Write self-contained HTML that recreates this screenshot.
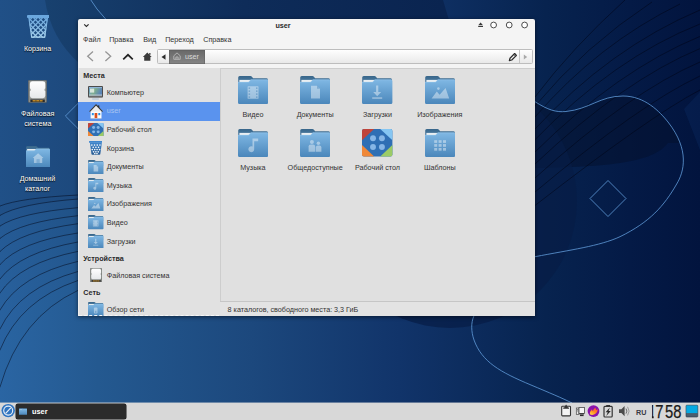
<!DOCTYPE html>
<html lang="ru">
<head>
<meta charset="utf-8">
<title>user</title>
<style>
html,body{margin:0;padding:0;}
body{width:700px;height:420px;overflow:hidden;position:relative;font-family:"Liberation Sans",sans-serif;font-size:7.2px;color:#333;background:#0a2a5e;}
.abs{position:absolute;}
svg{display:block;}
#wall{position:absolute;left:0;top:0;width:700px;height:420px;}
.dlabel{position:absolute;width:76px;text-align:center;color:#fff;font-size:7.2px;line-height:10px;text-shadow:0 1px 1px rgba(0,0,0,.8),0 0 1px rgba(0,0,0,.5);}
#win{position:absolute;left:78px;top:19px;width:457px;height:297px;background:#f4f4f4;border-radius:2px 2px 0 0;box-shadow:0 1px 4.5px rgba(0,0,0,.55);overflow:hidden;}
#title{position:absolute;left:155.4px;top:0.3px;width:100px;height:13px;line-height:13px;text-align:center;font-weight:bold;color:#2a2a2a;font-size:8px;transform:scaleX(0.9);}
.menu{position:absolute;top:15px;height:11px;line-height:11px;color:#333;}
#loc{position:absolute;left:79px;top:30px;width:375.7px;height:14.5px;box-sizing:border-box;border:0.7px solid #bdbdbd;border-radius:1.5px;background:linear-gradient(#fefefe,#e9e9e9);}
#side{position:absolute;left:0;top:49px;width:141.5px;height:248px;background:#e1e1e1;overflow:hidden;box-shadow:inset 1px 0 #ededed;}
#main{position:absolute;left:142px;top:49px;width:315px;height:233px;background:#e0e0e0;border-left:1px solid #cdcdcd;border-top:1px solid #cdcdcd;box-sizing:border-box;}
#status{position:absolute;left:142px;top:282px;width:315px;height:15px;line-height:15px;background:#e3e3e3;border-top:1px solid #c6c6c6;box-sizing:border-box;}
.srow{position:absolute;left:1px;width:141px;height:18.6px;line-height:18.6px;}
.srow span{position:absolute;left:27.7px;top:0.9px;white-space:nowrap;}
.shead{position:absolute;left:5.3px;font-weight:bold;color:#2a2a2a;height:12px;line-height:12px;}
.sel{background:#5a93ee;left:0 !important;padding-left:1px;height:19px !important;}
.sel span{color:#a8c5f1;}
.sel > *{margin-left:1px;}
.flabel{position:absolute;width:80px;text-align:center;white-space:nowrap;height:10px;line-height:10px;}
#bar{position:absolute;left:0;top:402px;width:700px;height:18px;background:#d8d8d8;border-top:1px solid rgba(222,222,222,0.42);background-clip:padding-box;box-sizing:border-box;}
</style>
</head>
<body>
<svg id="wall" viewBox="0 0 700 420">
<defs>
<linearGradient id="bg" gradientUnits="userSpaceOnUse" x1="0" y1="0" x2="700" y2="0">
<stop offset="0" stop-color="#2a65a3"/>
<stop offset="0.14" stop-color="#245990"/>
<stop offset="0.36" stop-color="#1c487d"/>
<stop offset="0.57" stop-color="#11346a"/>
<stop offset="0.78" stop-color="#07234f"/>
<stop offset="0.9" stop-color="#041a46"/>
<stop offset="1" stop-color="#02143e"/>
</linearGradient>
<linearGradient id="topd" gradientUnits="userSpaceOnUse" x1="45" y1="0" x2="443" y2="0">
<stop offset="0" stop-color="#18416f"/>
<stop offset="0.5" stop-color="#0e2c59"/>
<stop offset="1" stop-color="#0a2450"/>
</linearGradient>
<linearGradient id="ab10" gradientUnits="userSpaceOnUse" x1="0" y1="0" x2="98" y2="0"><stop offset="0" stop-color="#2964a1"/><stop offset="1" stop-color="#23588f"/></linearGradient>
<linearGradient id="ab9" gradientUnits="userSpaceOnUse" x1="0" y1="0" x2="98" y2="0"><stop offset="0" stop-color="#2962a0"/><stop offset="1" stop-color="#23578d"/></linearGradient>
<linearGradient id="ab8" gradientUnits="userSpaceOnUse" x1="0" y1="0" x2="98" y2="0"><stop offset="0" stop-color="#28619e"/><stop offset="1" stop-color="#22568c"/></linearGradient>
<linearGradient id="ab7" gradientUnits="userSpaceOnUse" x1="0" y1="0" x2="98" y2="0"><stop offset="0" stop-color="#28609c"/><stop offset="1" stop-color="#22558b"/></linearGradient>
<linearGradient id="ab6" gradientUnits="userSpaceOnUse" x1="0" y1="0" x2="98" y2="0"><stop offset="0" stop-color="#275f9b"/><stop offset="1" stop-color="#215489"/></linearGradient>
<linearGradient id="ab5" gradientUnits="userSpaceOnUse" x1="0" y1="0" x2="98" y2="0"><stop offset="0" stop-color="#265d99"/><stop offset="1" stop-color="#215388"/></linearGradient>
<linearGradient id="ab4" gradientUnits="userSpaceOnUse" x1="0" y1="0" x2="98" y2="0"><stop offset="0" stop-color="#265c97"/><stop offset="1" stop-color="#205287"/></linearGradient>
<linearGradient id="ab3" gradientUnits="userSpaceOnUse" x1="0" y1="0" x2="98" y2="0"><stop offset="0" stop-color="#255b96"/><stop offset="1" stop-color="#205185"/></linearGradient>
<linearGradient id="ab2" gradientUnits="userSpaceOnUse" x1="0" y1="0" x2="98" y2="0"><stop offset="0" stop-color="#255a94"/><stop offset="1" stop-color="#1f5084"/></linearGradient>
<linearGradient id="ab1" gradientUnits="userSpaceOnUse" x1="0" y1="0" x2="98" y2="0"><stop offset="0" stop-color="#23568f"/><stop offset="1" stop-color="#1e4c80"/></linearGradient>
<linearGradient id="ab0" gradientUnits="userSpaceOnUse" x1="0" y1="0" x2="98" y2="0"><stop offset="0" stop-color="#205087"/><stop offset="1" stop-color="#1c477a"/></linearGradient>
</defs>
<rect width="700" height="420" fill="url(#bg)"/>
<path d="M0,387 Q20,317.4 78,290.4 L86,289.4 L86,0 L0,0 Z" fill="url(#ab10)"/>
<path d="M0,350 Q20,300.0 78,280.5 L86,279.5 L86,0 L0,0 Z" fill="url(#ab9)"/>
<path d="M0,329 Q20,287.6 78,271.5 L86,270.5 L86,0 L0,0 Z" fill="url(#ab8)"/>
<path d="M0,310 Q20,275.0 78,261.4 L86,260.4 L86,0 L0,0 Z" fill="url(#ab7)"/>
<path d="M0,293 Q20,263.0 78,251.4 L86,250.4 L86,0 L0,0 Z" fill="url(#ab6)"/>
<path d="M0,279 Q20,252.4 78,242 L86,241 L86,0 L0,0 Z" fill="url(#ab5)"/>
<path d="M0,264.6 Q20,241.8 78,233 L86,232 L86,0 L0,0 Z" fill="url(#ab4)"/>
<path d="M0,251.5 Q20,231.5 78,223.7 L86,222.7 L86,0 L0,0 Z" fill="url(#ab3)"/>
<path d="M0,238.4 Q20,222.1 78,215.7 L86,214.7 L86,0 L0,0 Z" fill="url(#ab2)"/>
<path d="M0,226 Q20,212.8 78,207.7 L86,206.7 L86,0 L0,0 Z" fill="url(#ab1)"/>
<path d="M0,215.4 Q20,203.6 78,199 L86,198 L86,0 L0,0 Z" fill="url(#ab0)"/>
<path d="M45,0 A105,105 0 0 0 80,64 L462,64 L443,0 Z" fill="url(#topd)"/>
<path d="M535,101.7 C548,110 556,112.5 566,111.5 C590,109 600,96 623,96 C645,96 660,112 668,122 C676,132 679,138 680,143 L668,143 C655,160 620,167 535,168 Z" fill="#040f2c" fill-opacity="0.5"/>
<circle cx="450" cy="201" r="127" fill="#071c46" fill-opacity="0.7"/>
<path d="M684,109 L700,92 L700,150 Z" fill="#2a6ac0" fill-opacity="0.10"/>
<g fill="none" stroke="#000311" stroke-opacity="0.72" stroke-width="0.65">
<path d="M535,97 Q572,48 625,0"/>
<path d="M535,106 Q585,46 652,2"/>
<path d="M535,117 Q598,44 680,4"/>
<path d="M535,129 Q610,48 700,10"/>
<path d="M535,139.7 Q614,58 700,24"/>
<path d="M535,152 Q618,70 700,36.4"/>
<path d="M535,164 Q624,80 700,48.6"/>
<path d="M535,178 Q630,92 700,62"/>
<path d="M535,192 Q640,104 700,76"/>
<path d="M535,205.5 Q650,116 700,90"/>
<path d="M-1,207.2 L0,206 Q20,198 78,195 l6,-0.3"/>
<path d="M-1,216.9 L0,215.4 Q20,203.6 78,199 l6,-0.5"/>
<path d="M-1,227.5 L0,226 Q20,212.8 78,207.7 l6,-0.5"/>
<path d="M-1,239.9 L0,238.4 Q20,222.1 78,215.7 l6,-0.7"/>
<path d="M-1,253.0 L0,251.5 Q20,231.5 78,223.7 l6,-0.8"/>
<path d="M-1,266.1 L0,264.6 Q20,241.8 78,233 l6,-0.9"/>
<path d="M-1,280.5 L0,279 Q20,252.4 78,242 l6,-1.1"/>
<path d="M-1,294.5 L0,293 Q20,263.0 78,251.4 l6,-1.2"/>
<path d="M-1,311.5 L0,310 Q20,275.0 78,261.4 l6,-1.4"/>
<path d="M-1,330.5 L0,329 Q20,287.6 78,271.5 l6,-1.7"/>
<path d="M-1,351.5 L0,350 Q20,300.0 78,280.5 l6,-2.0"/>
<path d="M-1,388.5 L0,387 Q20,317.4 78,290.4 l6,-2.8"/>
</g>
<g fill="none" stroke="#5f9ad8" stroke-opacity="0.9" stroke-width="0.9">
<path d="M535,101.7 C548,110 556,112.5 566,111.5 C590,109 600,96 623,96 C645,96 660,112 668,122 C690,150 684,172 676.7,184 C664,206 650,222 620,236.7 C600,246 570,250 535,256.7"/>
<path d="M490,300 C474,308 468,322 474,340 C482,362 500,372 531,385 C550,393 562,398 572,403"/>
<path d="M89.5,-2 Q96,9 106.5,20"/>
<path d="M608,180.5 L626,198.5 L608,216.5 L590,198.5 Z"/>
<path d="M82,99.4 L65.4,116 L82,132.6"/>
</g>
</svg>
<div class="abs" style="left:26.6px;top:14.9px;line-height:0;"><svg width="22.4" height="22.8" viewBox="0 0 22.4 22.8" preserveAspectRatio="none">
<defs><linearGradient id="tg15" x1="0" y1="0" x2="0" y2="1"><stop offset="0" stop-color="#6aa6dc"/><stop offset="1" stop-color="#a4d0ec"/></linearGradient>
<clipPath id="tc15"><path d="M1.6,2.6 L20.8,2.6 L18,22.8 L4.4,22.8 Z"/></clipPath></defs>
<g clip-path="url(#tc15)" stroke="url(#tg15)" stroke-width="1.25" fill="none"><path d="M-31.2,2 L-10.2,23" /><path d="M-10.2,2 L-31.2,23" /><path d="M-25.9,2 L-4.9,23" /><path d="M-4.9,2 L-25.9,23" /><path d="M-20.6,2 L0.4,23" /><path d="M0.4,2 L-20.6,23" /><path d="M-15.3,2 L5.7,23" /><path d="M5.7,2 L-15.3,23" /><path d="M-10.0,2 L11.0,23" /><path d="M11.0,2 L-10.0,23" /><path d="M-4.7,2 L16.3,23" /><path d="M16.3,2 L-4.7,23" /><path d="M0.6,2 L21.6,23" /><path d="M21.6,2 L0.6,23" /><path d="M5.9,2 L26.9,23" /><path d="M26.9,2 L5.9,23" /><path d="M11.2,2 L32.2,23" /><path d="M32.2,2 L11.2,23" /><path d="M16.5,2 L37.5,23" /><path d="M37.5,2 L16.5,23" /><path d="M21.8,2 L42.8,23" /><path d="M42.8,2 L21.8,23" /><path d="M27.1,2 L48.1,23" /><path d="M48.1,2 L27.1,23" /><path d="M32.4,2 L53.4,23" /><path d="M53.4,2 L32.4,23" /><path d="M37.7,2 L58.7,23" /><path d="M58.7,2 L37.7,23" /><path d="M43.0,2 L64.0,23" /><path d="M64.0,2 L43.0,23" /><path d="M48.3,2 L69.3,23" /><path d="M69.3,2 L48.3,23" /><path d="M53.6,2 L74.6,23" /><path d="M74.6,2 L53.6,23" /><path d="M58.9,2 L79.9,23" /><path d="M79.9,2 L58.9,23" /></g>
<path d="M1.9,2.6 L4.7,22.2 L17.7,22.2 L20.5,2.6" fill="none" stroke="url(#tg15)" stroke-width="1.2"/>
<rect x="0" y="0" width="22.4" height="3" rx="0.9" fill="#6ba7de"/></svg></div>
<div class="dlabel" style="left:-0.4px;top:43.6px;">Корзина</div>
<div class="abs" style="left:28px;top:80px;line-height:0;"><svg width="19" height="22.8" viewBox="0 0 19 23" preserveAspectRatio="none">
<defs><linearGradient id="dg16" x1="0" y1="0" x2="0" y2="1"><stop offset="0" stop-color="#ffffff"/><stop offset="1" stop-color="#e6e8ea"/></linearGradient></defs>
<rect x="0.3" y="0.3" width="18.4" height="22.4" rx="1" fill="#8b8e8b" stroke="#5c5e5c" stroke-width="0.6"/>
<path d="M4.4,1.2 L14.8,1.2 Q17.3,1.2 17.3,3.7 L17.3,8.2 Q16.5,8.8 16.5,9.8 Q16.5,10.8 17.3,11.4 L17.3,15.9 Q17.3,18.4 14.8,18.4 L4.4,18.4 Q1.9,18.4 1.9,15.9 L1.9,11.4 Q2.7,10.8 2.7,9.8 Q2.7,8.8 1.9,8.2 L1.9,3.7 Q1.9,1.2 4.4,1.2 Z" fill="url(#dg16)"/>
<rect x="2.4" y="19.7" width="14.4" height="2.5" fill="#2c2c2a"/>
<rect x="4.6" y="20.4" width="10" height="1.2" fill="#e9a227"/>
<rect x="7.6" y="20.4" width="0.7" height="1.2" fill="#2c2c2a"/><rect x="11" y="20.4" width="0.7" height="1.2" fill="#2c2c2a"/>
</svg></div>
<div class="dlabel" style="left:-0.2px;top:108.6px;">Файловая<br>система</div>
<div class="abs" style="left:25.8px;top:145.5px;line-height:0;"><svg width="24.2" height="21.7" viewBox="0 0 30.4 28" preserveAspectRatio="none">
<defs><linearGradient id="fb17" x1="0" y1="0" x2="0" y2="1"><stop offset="0" stop-color="#38668a"/><stop offset="1" stop-color="#5f90b8"/></linearGradient>
<linearGradient id="ff17" x1="0" y1="0" x2="0" y2="1"><stop offset="0" stop-color="#80b8e4"/><stop offset="1" stop-color="#4b87bb"/></linearGradient></defs>
<path d="M0.2,1.6 Q0.2,0.1 1.7,0.1 L12.4,0.1 Q13.4,0.1 14.1,0.9 L15.2,2.2 L28.4,2.2 Q29.8,2.2 29.8,3.6 L29.8,12 L0.2,12 Z" fill="url(#fb17)"/>
<rect x="1.4" y="3.9" width="11.5" height="3" fill="#e9eef2"/>
<path d="M0,5.9 L10.6,5.9 L12.8,3.5 L28.9,3.5 Q30.4,3.5 30.4,5 L30.4,26.4 Q30.4,27.9 28.9,27.9 L1.5,27.9 Q0,27.9 0,26.4 Z" fill="url(#ff17)"/>
<path d="M0.3,6.2 L10.75,6.2 L12.95,3.8 L29,3.8" fill="none" stroke="#a5d0f0" stroke-width="0.5" opacity="0.8"/>
<path d="M15.2,9.4 L22,15.4 L20.4,15.4 L20.4,22 L10,22 L10,15.4 L8.4,15.4 Z" fill="#ffffff" fill-opacity="0.42"/><rect x="13.2" y="17" width="4" height="5" fill="#5a95c8" fill-opacity="0.5"/>
</svg></div>
<div class="dlabel" style="left:-0.5px;top:173.6px;">Домашний<br>каталог</div>

<div id="win">
<div id="title">user</div>
<svg class="abs" style="left:2px;top:2px;" width="12" height="8" viewBox="0 0 12 8"><path d="M4.2,3.3 L6.4,5.5 L8.6,3.3" fill="none" stroke="#2a2a2a" stroke-width="1.15"/></svg>
<svg class="abs" style="left:397px;top:0;" width="60" height="13" viewBox="0 0 60 13">
<path d="M5.6,3.6 L8,6.2 L3.2,6.2 Z M3.2,6.9 h4.8 v1.2 h-4.8 Z" fill="#3a3a3a"/>
<circle cx="18.6" cy="6" r="2.9" fill="#fff" stroke="#3a3a3a" stroke-width="0.9"/>
<circle cx="34.2" cy="6" r="2.9" fill="#fff" stroke="#3a3a3a" stroke-width="0.9"/>
<circle cx="49.6" cy="6" r="2.9" fill="#fff" stroke="#3a3a3a" stroke-width="0.9"/>
</svg>
<div class="menu" style="left:5px;">Файл</div>
<div class="menu" style="left:31.2px;">Правка</div>
<div class="menu" style="left:65.2px;">Вид</div>
<div class="menu" style="left:87.2px;">Переход</div>
<div class="menu" style="left:125.2px;">Справка</div>
<svg class="abs" style="left:0;top:28px;" width="80" height="20" viewBox="0 0 80 20">
<path d="M15,4.4 L9.7,9.2 L15,14" fill="none" stroke="#969696" stroke-width="1.3"/>
<path d="M27.4,4.4 L32.7,9.2 L27.4,14" fill="none" stroke="#969696" stroke-width="1.3"/>
<path d="M45.2,12.4 L50,7.8 L54.8,12.4" fill="none" stroke="#242424" stroke-width="1.7"/>
<path d="M69.3,5.6 L73.7,9.9 L72.4,9.9 L72.4,13.7 L66.2,13.7 L66.2,9.9 L64.9,9.9 Z M71.2,5.9 h1.3 v1.8 h-1.3 Z" fill="#3a3a3a"/>
</svg>
<div id="loc">

<svg class="abs" style="left:2.9px;top:3.9px;" width="5" height="6" viewBox="0 0 5 6"><path d="M4.5,0.2 L4.5,5.8 L0.5,3 Z" fill="#2c2c2c"/></svg>
<div class="abs" style="left:10.8px;top:-0.4px;width:36.4px;height:14px;background:linear-gradient(#686868,#858585);box-shadow:inset 0 0 0 0.5px #5e5e5e;"></div>
<svg class="abs" style="left:14.6px;top:2.4px;" width="8" height="8" viewBox="0 0 9 9"><path d="M0.9,4.3 L4.5,1 L8.1,4.3 L8.1,8.2 L0.9,8.2 Z M3.3,8.2 L3.3,5.6 L5.7,5.6 L5.7,8.2" fill="none" stroke="#c6c6c6" stroke-width="0.85"/></svg>
<div class="abs" style="left:27px;top:0;height:13px;line-height:13.4px;color:#dadada;">user</div>
<div class="abs" style="left:361px;top:0;width:0.7px;height:13.1px;background:#c4c4c4;"></div>
<svg class="abs" style="left:350px;top:1.9px;" width="10" height="10" viewBox="0 0 9 9"><path d="M1.2,7.8 L1.8,5.6 L6,1.4 L7.6,3 L3.4,7.2 Z" fill="none" stroke="#2c2c2c" stroke-width="1.1" stroke-linejoin="round"/><path d="M5.2,2.2 L6.8,3.8" stroke="#2c2c2c" stroke-width="0.8"/></svg>
<svg class="abs" style="left:365px;top:3.6px;" width="5" height="6" viewBox="0 0 5 6"><path d="M0.8,0.4 L0.8,5.6 L4.2,3 Z" fill="#a9a9a9"/></svg>
</div>
<div id="side"><div class="shead" style="top:2px;">Места</div><div class="srow" style="top:15px;"><div class="abs" style="left:9.4px;top:2.9px;line-height:0;"><svg width="15" height="14" viewBox="0 0 15 14">
<defs><linearGradient id="scr" x1="0" y1="0" x2="1" y2="0.3"><stop offset="0" stop-color="#6fa3cf"/><stop offset="0.5" stop-color="#7fae8e"/><stop offset="1" stop-color="#5b84b5"/></linearGradient></defs>
<rect x="0" y="0" width="15" height="11.4" rx="0.9" fill="#4c4c4c"/>
<rect x="1" y="1" width="13" height="8.6" fill="url(#scr)"/>
<rect x="1" y="1" width="13" height="1.1" fill="#8fb4d6"/>
<rect x="2" y="2.6" width="4.2" height="4" fill="#e8f0e4" fill-opacity="0.85"/>
<rect x="1" y="8.6" width="13" height="1" fill="#c9d2d8"/>
<rect x="0.6" y="10" width="13.8" height="1.2" fill="#6a6a6a"/>
<rect x="4" y="12.6" width="7" height="0.9" rx="0.4" fill="#a9c0d6"/>
</svg></div><span>Компьютер</span></div><div class="srow sel" style="top:33.5px;"><div class="abs" style="left:9.8px;top:2.2px;line-height:0;"><svg width="14.3" height="15" viewBox="0 0 15 15" preserveAspectRatio="none">
<rect x="9.2" y="1.4" width="1.6" height="3" fill="#333"/>
<rect x="1.7" y="7" width="11.4" height="7.2" fill="#fbfbfb"/>
<path d="M7.4,0.9 L14.2,7.6 L0.6,7.6 Z" fill="#ececec"/>
<path d="M0.6,7.7 L7.4,0.9 L14.2,7.7" fill="none" stroke="#3a3a3a" stroke-width="1.1" stroke-linejoin="miter"/>
<rect x="5.9" y="9" width="2.8" height="5.2" fill="#dd4f1c"/>
<rect x="3" y="9" width="2" height="2.2" fill="#2b8fe3"/>
<rect x="9.8" y="9" width="2" height="2.2" fill="#2b8fe3"/>
<rect x="1.7" y="14" width="11.4" height="0.6" fill="#d0d0d0"/>
</svg></div><span>user</span></div><div class="srow" style="top:52.2px;"><div class="abs" style="left:9px;top:2.6px;line-height:0;"><svg width="15.5" height="13.5" viewBox="0 0 16 14" preserveAspectRatio="none">
<rect x="0" y="0" width="16" height="14" rx="1" fill="#2f6fb4"/>
<path d="M0,1 Q0,0 1,0 L6.4,0 L0,5.8 Z" fill="#c0443a"/>
<path d="M9.6,0 L15,0 Q16,0 16,1 L16,5.8 Z" fill="#86c6f2"/>
<path d="M0,8.2 L6.4,14 L1,14 Q0,14 0,13 Z" fill="#f08838"/>
<path d="M16,8.2 L16,13 Q16,14 15,14 L9.6,14 Z" fill="#9bcb66"/>
<circle cx="5.8" cy="4.7" r="1.55" fill="#86b6e6"/><circle cx="10.5" cy="4.7" r="1.55" fill="#86b6e6"/>
<circle cx="5.8" cy="9.2" r="1.55" fill="#86b6e6"/><circle cx="10.5" cy="9.2" r="1.55" fill="#86b6e6"/>
</svg></div><span>Рабочий стол</span></div><div class="srow" style="top:70.8px;"><div class="abs" style="left:9.7px;top:2.5px;line-height:0;"><svg width="13.8" height="13.7" viewBox="0 0 14 14" preserveAspectRatio="none">
<defs><linearGradient id="tg0" x1="0" y1="0" x2="0" y2="1"><stop offset="0" stop-color="#4186cc"/><stop offset="1" stop-color="#295c92"/></linearGradient></defs>
<path d="M0.9,1.6 L13.1,1.6 L11.5,13.4 Q11.4,14 10.8,14 L3.2,14 Q2.6,14 2.5,13.4 Z" fill="url(#tg0)"/><circle cx="2.9" cy="4.2" r="0.85" fill="#f3f7fb"/><circle cx="5.65" cy="4.2" r="0.85" fill="#f3f7fb"/><circle cx="8.35" cy="4.2" r="0.85" fill="#f3f7fb"/><circle cx="11.1" cy="4.2" r="0.85" fill="#f3f7fb"/><circle cx="4.3" cy="6.5" r="0.85" fill="#f3f7fb"/><circle cx="7" cy="6.5" r="0.85" fill="#f3f7fb"/><circle cx="9.7" cy="6.5" r="0.85" fill="#f3f7fb"/><circle cx="3.3" cy="8.8" r="0.85" fill="#f3f7fb"/><circle cx="5.8" cy="8.8" r="0.85" fill="#f3f7fb"/><circle cx="8.2" cy="8.8" r="0.85" fill="#f3f7fb"/><circle cx="10.7" cy="8.8" r="0.85" fill="#f3f7fb"/><circle cx="4.6" cy="11.1" r="0.85" fill="#f3f7fb"/><circle cx="7" cy="11.1" r="0.85" fill="#f3f7fb"/><circle cx="9.4" cy="11.1" r="0.85" fill="#f3f7fb"/><circle cx="5.9" cy="12.9" r="0.85" fill="#f3f7fb"/><circle cx="8.1" cy="12.9" r="0.85" fill="#f3f7fb"/><rect x="0" y="0" width="14" height="1.9" rx="0.6" fill="#3f86cd"/></svg></div><span>Корзина</span></div><div class="srow" style="top:89.4px;"><div class="abs" style="left:9px;top:2.2px;line-height:0;"><svg width="15.5" height="14.2" viewBox="0 0 30.4 28" preserveAspectRatio="none">
<defs><linearGradient id="fb1" x1="0" y1="0" x2="0" y2="1"><stop offset="0" stop-color="#38668a"/><stop offset="1" stop-color="#5f90b8"/></linearGradient>
<linearGradient id="ff1" x1="0" y1="0" x2="0" y2="1"><stop offset="0" stop-color="#80b8e4"/><stop offset="1" stop-color="#4b87bb"/></linearGradient></defs>
<path d="M0.2,1.6 Q0.2,0.1 1.7,0.1 L12.4,0.1 Q13.4,0.1 14.1,0.9 L15.2,2.2 L28.4,2.2 Q29.8,2.2 29.8,3.6 L29.8,12 L0.2,12 Z" fill="url(#fb1)"/>
<rect x="1.4" y="3.9" width="11.5" height="3" fill="#e9eef2"/>
<path d="M0,5.9 L10.6,5.9 L12.8,3.5 L28.9,3.5 Q30.4,3.5 30.4,5 L30.4,26.4 Q30.4,27.9 28.9,27.9 L1.5,27.9 Q0,27.9 0,26.4 Z" fill="url(#ff1)"/>
<path d="M0.3,6.2 L10.75,6.2 L12.95,3.8 L29,3.8" fill="none" stroke="#a5d0f0" stroke-width="0.5" opacity="0.8"/>
<path d="M11,9.8 L17,9.8 L20,12.8 L20,22.6 L11,22.6 Z" fill="#ffffff" fill-opacity="0.42"/><path d="M17,9.8 L17,12.8 L20,12.8 Z" fill="#4a86b8" fill-opacity="0.45"/>
</svg></div><span>Документы</span></div><div class="srow" style="top:108px;"><div class="abs" style="left:9px;top:2.2px;line-height:0;"><svg width="15.5" height="14.2" viewBox="0 0 30.4 28" preserveAspectRatio="none">
<defs><linearGradient id="fb2" x1="0" y1="0" x2="0" y2="1"><stop offset="0" stop-color="#38668a"/><stop offset="1" stop-color="#5f90b8"/></linearGradient>
<linearGradient id="ff2" x1="0" y1="0" x2="0" y2="1"><stop offset="0" stop-color="#80b8e4"/><stop offset="1" stop-color="#4b87bb"/></linearGradient></defs>
<path d="M0.2,1.6 Q0.2,0.1 1.7,0.1 L12.4,0.1 Q13.4,0.1 14.1,0.9 L15.2,2.2 L28.4,2.2 Q29.8,2.2 29.8,3.6 L29.8,12 L0.2,12 Z" fill="url(#fb2)"/>
<rect x="1.4" y="3.9" width="11.5" height="3" fill="#e9eef2"/>
<path d="M0,5.9 L10.6,5.9 L12.8,3.5 L28.9,3.5 Q30.4,3.5 30.4,5 L30.4,26.4 Q30.4,27.9 28.9,27.9 L1.5,27.9 Q0,27.9 0,26.4 Z" fill="url(#ff2)"/>
<path d="M0.3,6.2 L10.75,6.2 L12.95,3.8 L29,3.8" fill="none" stroke="#a5d0f0" stroke-width="0.5" opacity="0.8"/>
<path d="M14.5,9.4 L20.2,9.4 L20.2,12.2 L16.2,12.2 L16.2,20.2 A2.9,2.9 0 1 1 14.5,17.6 Z" fill="#ffffff" fill-opacity="0.42"/>
</svg></div><span>Музыка</span></div><div class="srow" style="top:126.6px;"><div class="abs" style="left:9px;top:2.2px;line-height:0;"><svg width="15.5" height="14.2" viewBox="0 0 30.4 28" preserveAspectRatio="none">
<defs><linearGradient id="fb3" x1="0" y1="0" x2="0" y2="1"><stop offset="0" stop-color="#38668a"/><stop offset="1" stop-color="#5f90b8"/></linearGradient>
<linearGradient id="ff3" x1="0" y1="0" x2="0" y2="1"><stop offset="0" stop-color="#80b8e4"/><stop offset="1" stop-color="#4b87bb"/></linearGradient></defs>
<path d="M0.2,1.6 Q0.2,0.1 1.7,0.1 L12.4,0.1 Q13.4,0.1 14.1,0.9 L15.2,2.2 L28.4,2.2 Q29.8,2.2 29.8,3.6 L29.8,12 L0.2,12 Z" fill="url(#fb3)"/>
<rect x="1.4" y="3.9" width="11.5" height="3" fill="#e9eef2"/>
<path d="M0,5.9 L10.6,5.9 L12.8,3.5 L28.9,3.5 Q30.4,3.5 30.4,5 L30.4,26.4 Q30.4,27.9 28.9,27.9 L1.5,27.9 Q0,27.9 0,26.4 Z" fill="url(#ff3)"/>
<path d="M0.3,6.2 L10.75,6.2 L12.95,3.8 L29,3.8" fill="none" stroke="#a5d0f0" stroke-width="0.5" opacity="0.8"/>
<path d="M6.6,22.6 L11.8,15.6 L14.6,18.8 L20.6,12 L24.2,22.6 Z" fill="#ffffff" fill-opacity="0.42"/><circle cx="13.4" cy="12.6" r="1.3" fill="#ffffff" fill-opacity="0.42"/>
</svg></div><span>Изображения</span></div><div class="srow" style="top:145.2px;"><div class="abs" style="left:9px;top:2.2px;line-height:0;"><svg width="15.5" height="14.2" viewBox="0 0 30.4 28" preserveAspectRatio="none">
<defs><linearGradient id="fb4" x1="0" y1="0" x2="0" y2="1"><stop offset="0" stop-color="#38668a"/><stop offset="1" stop-color="#5f90b8"/></linearGradient>
<linearGradient id="ff4" x1="0" y1="0" x2="0" y2="1"><stop offset="0" stop-color="#80b8e4"/><stop offset="1" stop-color="#4b87bb"/></linearGradient></defs>
<path d="M0.2,1.6 Q0.2,0.1 1.7,0.1 L12.4,0.1 Q13.4,0.1 14.1,0.9 L15.2,2.2 L28.4,2.2 Q29.8,2.2 29.8,3.6 L29.8,12 L0.2,12 Z" fill="url(#fb4)"/>
<rect x="1.4" y="3.9" width="11.5" height="3" fill="#e9eef2"/>
<path d="M0,5.9 L10.6,5.9 L12.8,3.5 L28.9,3.5 Q30.4,3.5 30.4,5 L30.4,26.4 Q30.4,27.9 28.9,27.9 L1.5,27.9 Q0,27.9 0,26.4 Z" fill="url(#ff4)"/>
<path d="M0.3,6.2 L10.75,6.2 L12.95,3.8 L29,3.8" fill="none" stroke="#a5d0f0" stroke-width="0.5" opacity="0.8"/>
<rect x="9.6" y="10.2" width="10.9" height="12.6" rx="0.6" fill="#ffffff" fill-opacity="0.42"/><rect x="10.6" y="11.4" width="1.5" height="1.5" fill="#4a86b8" fill-opacity="0.55"/><rect x="10.6" y="14.4" width="1.5" height="1.5" fill="#4a86b8" fill-opacity="0.55"/><rect x="10.6" y="17.4" width="1.5" height="1.5" fill="#4a86b8" fill-opacity="0.55"/><rect x="10.6" y="20.4" width="1.5" height="1.5" fill="#4a86b8" fill-opacity="0.55"/><rect x="18" y="11.4" width="1.5" height="1.5" fill="#4a86b8" fill-opacity="0.55"/><rect x="18" y="14.4" width="1.5" height="1.5" fill="#4a86b8" fill-opacity="0.55"/><rect x="18" y="17.4" width="1.5" height="1.5" fill="#4a86b8" fill-opacity="0.55"/><rect x="18" y="20.4" width="1.5" height="1.5" fill="#4a86b8" fill-opacity="0.55"/>
</svg></div><span>Видео</span></div><div class="srow" style="top:163.8px;"><div class="abs" style="left:9px;top:2.2px;line-height:0;"><svg width="15.5" height="14.2" viewBox="0 0 30.4 28" preserveAspectRatio="none">
<defs><linearGradient id="fb5" x1="0" y1="0" x2="0" y2="1"><stop offset="0" stop-color="#38668a"/><stop offset="1" stop-color="#5f90b8"/></linearGradient>
<linearGradient id="ff5" x1="0" y1="0" x2="0" y2="1"><stop offset="0" stop-color="#80b8e4"/><stop offset="1" stop-color="#4b87bb"/></linearGradient></defs>
<path d="M0.2,1.6 Q0.2,0.1 1.7,0.1 L12.4,0.1 Q13.4,0.1 14.1,0.9 L15.2,2.2 L28.4,2.2 Q29.8,2.2 29.8,3.6 L29.8,12 L0.2,12 Z" fill="url(#fb5)"/>
<rect x="1.4" y="3.9" width="11.5" height="3" fill="#e9eef2"/>
<path d="M0,5.9 L10.6,5.9 L12.8,3.5 L28.9,3.5 Q30.4,3.5 30.4,5 L30.4,26.4 Q30.4,27.9 28.9,27.9 L1.5,27.9 Q0,27.9 0,26.4 Z" fill="url(#ff5)"/>
<path d="M0.3,6.2 L10.75,6.2 L12.95,3.8 L29,3.8" fill="none" stroke="#a5d0f0" stroke-width="0.5" opacity="0.8"/>
<path d="M14.1,9.4 h2.2 v6.6 h2.9 l-4,4.2 l-4,-4.2 h2.9 Z" fill="#ffffff" fill-opacity="0.42"/><rect x="10.2" y="21.3" width="10" height="1.5" fill="#ffffff" fill-opacity="0.42"/>
</svg></div><span>Загрузки</span></div><div class="srow" style="top:198px;"><div class="abs" style="left:10.7px;top:2.2px;line-height:0;"><svg width="12.2" height="14.2" viewBox="0 0 19 23" preserveAspectRatio="none">
<defs><linearGradient id="dg6" x1="0" y1="0" x2="0" y2="1"><stop offset="0" stop-color="#ffffff"/><stop offset="1" stop-color="#e6e8ea"/></linearGradient></defs>
<rect x="0.3" y="0.3" width="18.4" height="22.4" rx="1" fill="#8b8e8b" stroke="#5c5e5c" stroke-width="0.6"/>
<path d="M4.4,1.2 L14.8,1.2 Q17.3,1.2 17.3,3.7 L17.3,8.2 Q16.5,8.8 16.5,9.8 Q16.5,10.8 17.3,11.4 L17.3,15.9 Q17.3,18.4 14.8,18.4 L4.4,18.4 Q1.9,18.4 1.9,15.9 L1.9,11.4 Q2.7,10.8 2.7,9.8 Q2.7,8.8 1.9,8.2 L1.9,3.7 Q1.9,1.2 4.4,1.2 Z" fill="url(#dg6)"/>
<rect x="2.4" y="19.7" width="14.4" height="2.5" fill="#2c2c2a"/>
<rect x="4.6" y="20.4" width="10" height="1.2" fill="#e9a227"/>
<rect x="7.6" y="20.4" width="0.7" height="1.2" fill="#2c2c2a"/><rect x="11" y="20.4" width="0.7" height="1.2" fill="#2c2c2a"/>
</svg></div><span>Файловая система</span></div><div class="srow" style="top:232px;"><div class="abs" style="left:9px;top:2.2px;line-height:0;"><svg width="15.5" height="14.2" viewBox="0 0 30.4 28" preserveAspectRatio="none">
<defs><linearGradient id="fb7" x1="0" y1="0" x2="0" y2="1"><stop offset="0" stop-color="#38668a"/><stop offset="1" stop-color="#5f90b8"/></linearGradient>
<linearGradient id="ff7" x1="0" y1="0" x2="0" y2="1"><stop offset="0" stop-color="#80b8e4"/><stop offset="1" stop-color="#4b87bb"/></linearGradient></defs>
<path d="M0.2,1.6 Q0.2,0.1 1.7,0.1 L12.4,0.1 Q13.4,0.1 14.1,0.9 L15.2,2.2 L28.4,2.2 Q29.8,2.2 29.8,3.6 L29.8,12 L0.2,12 Z" fill="url(#fb7)"/>
<rect x="1.4" y="3.9" width="11.5" height="3" fill="#e9eef2"/>
<path d="M0,5.9 L10.6,5.9 L12.8,3.5 L28.9,3.5 Q30.4,3.5 30.4,5 L30.4,26.4 Q30.4,27.9 28.9,27.9 L1.5,27.9 Q0,27.9 0,26.4 Z" fill="url(#ff7)"/>
<path d="M0.3,6.2 L10.75,6.2 L12.95,3.8 L29,3.8" fill="none" stroke="#a5d0f0" stroke-width="0.5" opacity="0.8"/>
<rect x="11.6" y="11" width="7" height="11.6" rx="1.6" fill="#ffffff" fill-opacity="0.42"/><rect x="13.6" y="17.4" width="3" height="4" fill="#4a86b8" fill-opacity="0.5"/>
</svg></div><span>Обзор сети</span></div><div class="shead" style="top:185px;">Устройства</div><div class="shead" style="top:219px;">Сеть</div><div class="abs" style="left:1px;top:247px;width:140px;height:0;border-top:1px dashed #f6f6f6;"></div></div>
<div id="main"><div class="abs" style="left:16.7px;top:6.8px;line-height:0;"><svg width="30.4" height="28" viewBox="0 0 30.4 28" preserveAspectRatio="none">
<defs><linearGradient id="fb8" x1="0" y1="0" x2="0" y2="1"><stop offset="0" stop-color="#38668a"/><stop offset="1" stop-color="#5f90b8"/></linearGradient>
<linearGradient id="ff8" x1="0" y1="0" x2="0" y2="1"><stop offset="0" stop-color="#80b8e4"/><stop offset="1" stop-color="#4b87bb"/></linearGradient></defs>
<path d="M0.2,1.6 Q0.2,0.1 1.7,0.1 L12.4,0.1 Q13.4,0.1 14.1,0.9 L15.2,2.2 L28.4,2.2 Q29.8,2.2 29.8,3.6 L29.8,12 L0.2,12 Z" fill="url(#fb8)"/>
<rect x="1.4" y="3.9" width="11.5" height="3" fill="#e9eef2"/>
<path d="M0,5.9 L10.6,5.9 L12.8,3.5 L28.9,3.5 Q30.4,3.5 30.4,5 L30.4,26.4 Q30.4,27.9 28.9,27.9 L1.5,27.9 Q0,27.9 0,26.4 Z" fill="url(#ff8)"/>
<path d="M0.3,6.2 L10.75,6.2 L12.95,3.8 L29,3.8" fill="none" stroke="#a5d0f0" stroke-width="0.5" opacity="0.8"/>
<rect x="9.6" y="10.2" width="10.9" height="12.6" rx="0.6" fill="#ffffff" fill-opacity="0.42"/><rect x="10.6" y="11.4" width="1.5" height="1.5" fill="#4a86b8" fill-opacity="0.55"/><rect x="10.6" y="14.4" width="1.5" height="1.5" fill="#4a86b8" fill-opacity="0.55"/><rect x="10.6" y="17.4" width="1.5" height="1.5" fill="#4a86b8" fill-opacity="0.55"/><rect x="10.6" y="20.4" width="1.5" height="1.5" fill="#4a86b8" fill-opacity="0.55"/><rect x="18" y="11.4" width="1.5" height="1.5" fill="#4a86b8" fill-opacity="0.55"/><rect x="18" y="14.4" width="1.5" height="1.5" fill="#4a86b8" fill-opacity="0.55"/><rect x="18" y="17.4" width="1.5" height="1.5" fill="#4a86b8" fill-opacity="0.55"/><rect x="18" y="20.4" width="1.5" height="1.5" fill="#4a86b8" fill-opacity="0.55"/>
</svg></div><div class="flabel" style="left:-8.1px;top:41.0px;">Видео</div><div class="abs" style="left:79.0px;top:6.8px;line-height:0;"><svg width="30.4" height="28" viewBox="0 0 30.4 28" preserveAspectRatio="none">
<defs><linearGradient id="fb9" x1="0" y1="0" x2="0" y2="1"><stop offset="0" stop-color="#38668a"/><stop offset="1" stop-color="#5f90b8"/></linearGradient>
<linearGradient id="ff9" x1="0" y1="0" x2="0" y2="1"><stop offset="0" stop-color="#80b8e4"/><stop offset="1" stop-color="#4b87bb"/></linearGradient></defs>
<path d="M0.2,1.6 Q0.2,0.1 1.7,0.1 L12.4,0.1 Q13.4,0.1 14.1,0.9 L15.2,2.2 L28.4,2.2 Q29.8,2.2 29.8,3.6 L29.8,12 L0.2,12 Z" fill="url(#fb9)"/>
<rect x="1.4" y="3.9" width="11.5" height="3" fill="#e9eef2"/>
<path d="M0,5.9 L10.6,5.9 L12.8,3.5 L28.9,3.5 Q30.4,3.5 30.4,5 L30.4,26.4 Q30.4,27.9 28.9,27.9 L1.5,27.9 Q0,27.9 0,26.4 Z" fill="url(#ff9)"/>
<path d="M0.3,6.2 L10.75,6.2 L12.95,3.8 L29,3.8" fill="none" stroke="#a5d0f0" stroke-width="0.5" opacity="0.8"/>
<path d="M11,9.8 L17,9.8 L20,12.8 L20,22.6 L11,22.6 Z" fill="#ffffff" fill-opacity="0.42"/><path d="M17,9.8 L17,12.8 L20,12.8 Z" fill="#4a86b8" fill-opacity="0.45"/>
</svg></div><div class="flabel" style="left:54.2px;top:41.0px;">Документы</div><div class="abs" style="left:141.3px;top:6.8px;line-height:0;"><svg width="30.4" height="28" viewBox="0 0 30.4 28" preserveAspectRatio="none">
<defs><linearGradient id="fb10" x1="0" y1="0" x2="0" y2="1"><stop offset="0" stop-color="#38668a"/><stop offset="1" stop-color="#5f90b8"/></linearGradient>
<linearGradient id="ff10" x1="0" y1="0" x2="0" y2="1"><stop offset="0" stop-color="#80b8e4"/><stop offset="1" stop-color="#4b87bb"/></linearGradient></defs>
<path d="M0.2,1.6 Q0.2,0.1 1.7,0.1 L12.4,0.1 Q13.4,0.1 14.1,0.9 L15.2,2.2 L28.4,2.2 Q29.8,2.2 29.8,3.6 L29.8,12 L0.2,12 Z" fill="url(#fb10)"/>
<rect x="1.4" y="3.9" width="11.5" height="3" fill="#e9eef2"/>
<path d="M0,5.9 L10.6,5.9 L12.8,3.5 L28.9,3.5 Q30.4,3.5 30.4,5 L30.4,26.4 Q30.4,27.9 28.9,27.9 L1.5,27.9 Q0,27.9 0,26.4 Z" fill="url(#ff10)"/>
<path d="M0.3,6.2 L10.75,6.2 L12.95,3.8 L29,3.8" fill="none" stroke="#a5d0f0" stroke-width="0.5" opacity="0.8"/>
<path d="M14.1,9.4 h2.2 v6.6 h2.9 l-4,4.2 l-4,-4.2 h2.9 Z" fill="#ffffff" fill-opacity="0.42"/><rect x="10.2" y="21.3" width="10" height="1.5" fill="#ffffff" fill-opacity="0.42"/>
</svg></div><div class="flabel" style="left:116.5px;top:41.0px;">Загрузки</div><div class="abs" style="left:203.6px;top:6.8px;line-height:0;"><svg width="30.4" height="28" viewBox="0 0 30.4 28" preserveAspectRatio="none">
<defs><linearGradient id="fb11" x1="0" y1="0" x2="0" y2="1"><stop offset="0" stop-color="#38668a"/><stop offset="1" stop-color="#5f90b8"/></linearGradient>
<linearGradient id="ff11" x1="0" y1="0" x2="0" y2="1"><stop offset="0" stop-color="#80b8e4"/><stop offset="1" stop-color="#4b87bb"/></linearGradient></defs>
<path d="M0.2,1.6 Q0.2,0.1 1.7,0.1 L12.4,0.1 Q13.4,0.1 14.1,0.9 L15.2,2.2 L28.4,2.2 Q29.8,2.2 29.8,3.6 L29.8,12 L0.2,12 Z" fill="url(#fb11)"/>
<rect x="1.4" y="3.9" width="11.5" height="3" fill="#e9eef2"/>
<path d="M0,5.9 L10.6,5.9 L12.8,3.5 L28.9,3.5 Q30.4,3.5 30.4,5 L30.4,26.4 Q30.4,27.9 28.9,27.9 L1.5,27.9 Q0,27.9 0,26.4 Z" fill="url(#ff11)"/>
<path d="M0.3,6.2 L10.75,6.2 L12.95,3.8 L29,3.8" fill="none" stroke="#a5d0f0" stroke-width="0.5" opacity="0.8"/>
<path d="M6.6,22.6 L11.8,15.6 L14.6,18.8 L20.6,12 L24.2,22.6 Z" fill="#ffffff" fill-opacity="0.42"/><circle cx="13.4" cy="12.6" r="1.3" fill="#ffffff" fill-opacity="0.42"/>
</svg></div><div class="flabel" style="left:178.8px;top:41.0px;">Изображения</div><div class="abs" style="left:16.7px;top:59.7px;line-height:0;"><svg width="30.4" height="28" viewBox="0 0 30.4 28" preserveAspectRatio="none">
<defs><linearGradient id="fb12" x1="0" y1="0" x2="0" y2="1"><stop offset="0" stop-color="#38668a"/><stop offset="1" stop-color="#5f90b8"/></linearGradient>
<linearGradient id="ff12" x1="0" y1="0" x2="0" y2="1"><stop offset="0" stop-color="#80b8e4"/><stop offset="1" stop-color="#4b87bb"/></linearGradient></defs>
<path d="M0.2,1.6 Q0.2,0.1 1.7,0.1 L12.4,0.1 Q13.4,0.1 14.1,0.9 L15.2,2.2 L28.4,2.2 Q29.8,2.2 29.8,3.6 L29.8,12 L0.2,12 Z" fill="url(#fb12)"/>
<rect x="1.4" y="3.9" width="11.5" height="3" fill="#e9eef2"/>
<path d="M0,5.9 L10.6,5.9 L12.8,3.5 L28.9,3.5 Q30.4,3.5 30.4,5 L30.4,26.4 Q30.4,27.9 28.9,27.9 L1.5,27.9 Q0,27.9 0,26.4 Z" fill="url(#ff12)"/>
<path d="M0.3,6.2 L10.75,6.2 L12.95,3.8 L29,3.8" fill="none" stroke="#a5d0f0" stroke-width="0.5" opacity="0.8"/>
<path d="M14.5,9.4 L20.2,9.4 L20.2,12.2 L16.2,12.2 L16.2,20.2 A2.9,2.9 0 1 1 14.5,17.6 Z" fill="#ffffff" fill-opacity="0.42"/>
</svg></div><div class="flabel" style="left:-8.1px;top:93.9px;">Музыка</div><div class="abs" style="left:79.0px;top:59.7px;line-height:0;"><svg width="30.4" height="28" viewBox="0 0 30.4 28" preserveAspectRatio="none">
<defs><linearGradient id="fb13" x1="0" y1="0" x2="0" y2="1"><stop offset="0" stop-color="#38668a"/><stop offset="1" stop-color="#5f90b8"/></linearGradient>
<linearGradient id="ff13" x1="0" y1="0" x2="0" y2="1"><stop offset="0" stop-color="#80b8e4"/><stop offset="1" stop-color="#4b87bb"/></linearGradient></defs>
<path d="M0.2,1.6 Q0.2,0.1 1.7,0.1 L12.4,0.1 Q13.4,0.1 14.1,0.9 L15.2,2.2 L28.4,2.2 Q29.8,2.2 29.8,3.6 L29.8,12 L0.2,12 Z" fill="url(#fb13)"/>
<rect x="1.4" y="3.9" width="11.5" height="3" fill="#e9eef2"/>
<path d="M0,5.9 L10.6,5.9 L12.8,3.5 L28.9,3.5 Q30.4,3.5 30.4,5 L30.4,26.4 Q30.4,27.9 28.9,27.9 L1.5,27.9 Q0,27.9 0,26.4 Z" fill="url(#ff13)"/>
<path d="M0.3,6.2 L10.75,6.2 L12.95,3.8 L29,3.8" fill="none" stroke="#a5d0f0" stroke-width="0.5" opacity="0.8"/>
<circle cx="11.9" cy="12.9" r="2" fill="#ffffff" fill-opacity="0.42"/><path d="M8.6,22.8 v-5.2 q0,-2.2 2.2,-2.2 h2.2 q2.2,0 2.2,2.2 v5.2 Z" fill="#ffffff" fill-opacity="0.42"/><circle cx="18.4" cy="14.2" r="1.75" fill="#ffffff" fill-opacity="0.42"/><path d="M15.8,22.8 v-4.2 q0,-2 2,-2 h1.6 q2,0 2,2 v4.2 Z" fill="#ffffff" fill-opacity="0.42"/>
</svg></div><div class="flabel" style="left:54.2px;top:93.9px;">Общедоступные</div><div class="abs" style="left:141.3px;top:60.2px;line-height:0;"><svg width="30.4" height="27.4" viewBox="0 0 16 14" preserveAspectRatio="none">
<rect x="0" y="0" width="16" height="14" rx="1" fill="#2f6fb4"/>
<path d="M0,1 Q0,0 1,0 L6.4,0 L0,5.8 Z" fill="#c0443a"/>
<path d="M9.6,0 L15,0 Q16,0 16,1 L16,5.8 Z" fill="#86c6f2"/>
<path d="M0,8.2 L6.4,14 L1,14 Q0,14 0,13 Z" fill="#f08838"/>
<path d="M16,8.2 L16,13 Q16,14 15,14 L9.6,14 Z" fill="#9bcb66"/>
<circle cx="5.8" cy="4.7" r="1.55" fill="#86b6e6"/><circle cx="10.5" cy="4.7" r="1.55" fill="#86b6e6"/>
<circle cx="5.8" cy="9.2" r="1.55" fill="#86b6e6"/><circle cx="10.5" cy="9.2" r="1.55" fill="#86b6e6"/>
</svg></div><div class="flabel" style="left:116.5px;top:93.9px;">Рабочий стол</div><div class="abs" style="left:203.6px;top:59.7px;line-height:0;"><svg width="30.4" height="28" viewBox="0 0 30.4 28" preserveAspectRatio="none">
<defs><linearGradient id="fb14" x1="0" y1="0" x2="0" y2="1"><stop offset="0" stop-color="#38668a"/><stop offset="1" stop-color="#5f90b8"/></linearGradient>
<linearGradient id="ff14" x1="0" y1="0" x2="0" y2="1"><stop offset="0" stop-color="#80b8e4"/><stop offset="1" stop-color="#4b87bb"/></linearGradient></defs>
<path d="M0.2,1.6 Q0.2,0.1 1.7,0.1 L12.4,0.1 Q13.4,0.1 14.1,0.9 L15.2,2.2 L28.4,2.2 Q29.8,2.2 29.8,3.6 L29.8,12 L0.2,12 Z" fill="url(#fb14)"/>
<rect x="1.4" y="3.9" width="11.5" height="3" fill="#e9eef2"/>
<path d="M0,5.9 L10.6,5.9 L12.8,3.5 L28.9,3.5 Q30.4,3.5 30.4,5 L30.4,26.4 Q30.4,27.9 28.9,27.9 L1.5,27.9 Q0,27.9 0,26.4 Z" fill="url(#ff14)"/>
<path d="M0.3,6.2 L10.75,6.2 L12.95,3.8 L29,3.8" fill="none" stroke="#a5d0f0" stroke-width="0.5" opacity="0.8"/>
<rect x="9.2" y="11.2" width="3" height="2.7" fill="#ffffff" fill-opacity="0.42"/><rect x="9.2" y="15.1" width="3" height="2.7" fill="#ffffff" fill-opacity="0.42"/><rect x="9.2" y="19" width="3" height="2.7" fill="#ffffff" fill-opacity="0.42"/><rect x="13.6" y="11.2" width="3" height="2.7" fill="#ffffff" fill-opacity="0.42"/><rect x="13.6" y="15.1" width="3" height="2.7" fill="#ffffff" fill-opacity="0.42"/><rect x="13.6" y="19" width="3" height="2.7" fill="#ffffff" fill-opacity="0.42"/><rect x="18" y="11.2" width="3" height="2.7" fill="#ffffff" fill-opacity="0.42"/><rect x="18" y="15.1" width="3" height="2.7" fill="#ffffff" fill-opacity="0.42"/><rect x="18" y="19" width="3" height="2.7" fill="#ffffff" fill-opacity="0.42"/>
</svg></div><div class="flabel" style="left:178.8px;top:93.9px;">Шаблоны</div></div>
<div id="status"><span style="position:absolute;left:7.6px;">8 каталогов, свободного места: 3,3 ГиБ</span></div>
</div>

<div id="bar">
<svg class="abs" style="left:1px;top:0.3px;" width="15" height="15" viewBox="0 0 15 15"><circle cx="7.2" cy="7.6" r="6.7" fill="#2f74c0"/><circle cx="7.2" cy="7.6" r="4.5" fill="none" stroke="#e8f0f8" stroke-width="1.1"/><path d="M4.6,10.4 L9.8,4.8" stroke="#e8f0f8" stroke-width="1.2"/></svg>
<div class="abs" style="left:16.4px;top:0.8px;width:109.2px;height:15.2px;background:#2b2b2b;border-radius:2px;box-shadow:0 0 0 0.5px #1a1a1a;"></div>
<div class="abs" style="left:19px;top:5px;line-height:0;"><svg width="8.2" height="6.9" viewBox="0 0 30.4 28" preserveAspectRatio="none">
<defs><linearGradient id="fb18" x1="0" y1="0" x2="0" y2="1"><stop offset="0" stop-color="#38668a"/><stop offset="1" stop-color="#5f90b8"/></linearGradient>
<linearGradient id="ff18" x1="0" y1="0" x2="0" y2="1"><stop offset="0" stop-color="#80b8e4"/><stop offset="1" stop-color="#4b87bb"/></linearGradient></defs>
<path d="M0.2,1.6 Q0.2,0.1 1.7,0.1 L12.4,0.1 Q13.4,0.1 14.1,0.9 L15.2,2.2 L28.4,2.2 Q29.8,2.2 29.8,3.6 L29.8,12 L0.2,12 Z" fill="url(#fb18)"/>
<rect x="1.4" y="3.9" width="11.5" height="3" fill="#e9eef2"/>
<path d="M0,5.9 L10.6,5.9 L12.8,3.5 L28.9,3.5 Q30.4,3.5 30.4,5 L30.4,26.4 Q30.4,27.9 28.9,27.9 L1.5,27.9 Q0,27.9 0,26.4 Z" fill="url(#ff18)"/>
<path d="M0.3,6.2 L10.75,6.2 L12.95,3.8 L29,3.8" fill="none" stroke="#a5d0f0" stroke-width="0.5" opacity="0.8"/>

</svg></div>
<div class="abs" style="left:32px;top:1px;height:15px;line-height:15.4px;color:#fff;font-weight:bold;font-size:7.4px;">user</div>
<svg class="abs" style="left:556px;top:-1px;" width="144" height="18" viewBox="556 402 144 18">
<defs><linearGradient id="flm" x1="0" y1="1" x2="0.6" y2="0"><stop offset="0" stop-color="#ffe14a"/><stop offset="0.55" stop-color="#ff8a1f"/><stop offset="1" stop-color="#ff4f3a"/></linearGradient></defs>
<!-- clipboard -->
<rect x="561.7" y="406.3" width="8.8" height="9.6" rx="0.8" fill="#f3f3f3" stroke="#343434" stroke-width="1.1"/>
<path d="M563.2,408.8 L563.2,407.6 L564.2,407.6 L566.1,404.4 L568,407.6 L569,407.6 L569,408.8 Z" fill="#343434"/>

<!-- network -->
<rect x="576.3" y="408" width="2.6" height="6.6" fill="#e9e9e9" stroke="#4a4a4a" stroke-width="0.7"/>
<rect x="577" y="409.2" width="1.2" height="0.7" fill="#555"/><rect x="577" y="410.6" width="1.2" height="0.7" fill="#555"/>
<rect x="579" y="407.4" width="5.4" height="6" fill="#f6f6f6" stroke="#4a4a4a" stroke-width="0.8"/>
<rect x="579.4" y="413.2" width="4.6" height="1.2" fill="#3a3a3a"/>
<rect x="580" y="414.6" width="3.6" height="1.5" fill="#2c2c2c"/>
<!-- flame -->
<circle cx="593.5" cy="411.1" r="5.9" fill="#8b12ab"/>
<path d="M589.9,414.3 C589.6,412.2 590.6,410.9 592,409.3 C592.2,410.3 592.5,410.8 593,411 C593.4,409.6 594.3,408.3 595.7,407.5 C595.5,408.8 595.9,409.6 596.6,410.1 C596.9,409.6 597.3,409.3 597.8,409.1 C597.8,411.6 596.6,413.6 594,414.6 C592.4,415.1 590.9,415 589.9,414.3 Z" fill="url(#flm)"/>
<!-- battery -->
<rect x="606.2" y="405" width="3.8" height="1.6" fill="#343434"/>
<rect x="604" y="406.4" width="8.2" height="10.6" rx="0.9" fill="#d8d8d8" stroke="#343434" stroke-width="1.2"/>
<path d="M609.8,407.6 L605.6,412.2 L607.8,412.2 L606.2,416 L610.8,411 L608.6,411 Z" fill="#2a2a2a"/>
<!-- speaker -->
<path d="M619,409.2 L621.4,409.2 L624.6,406 L624.6,416.2 L621.4,413 L619,413 Z" fill="#4b4b4b"/>
<path d="M626,408.6 Q627.8,411.1 626,413.6" fill="none" stroke="#6a6a6a" stroke-width="1"/>
<path d="M627.6,406.8 Q630.6,411.1 627.6,415.4" fill="none" stroke="#9a9a9a" stroke-width="1"/>
<!-- desktop pager -->
<rect x="686" y="405.2" width="11.8" height="11.8" rx="0.8" fill="#4a5e6e" stroke="#2b3b4a" stroke-width="0.6"/>
<rect x="686.3" y="405.5" width="11.2" height="7.6" fill="#05a9e2"/>
</svg>
<div class="abs" style="left:636px;top:2.7px;height:14px;line-height:14px;color:#3a3a44;font-weight:bold;font-size:7.2px;">RU</div>
<div class="abs" id="clk" style="left:646.6px;top:0px;height:18px;line-height:18px;font-family:'Liberation Sans',sans-serif;font-size:17.8px;color:#1a1a1a;-webkit-text-stroke:0.25px #1a1a1a;transform-origin:0 0;transform:scaleX(0.83);white-space:nowrap;"><span style="display:inline-block;clip-path:inset(0 32% 0 47%);position:relative;left:1.3px;">1</span>7<span style="font-size:7px;color:#d8d8d8;-webkit-text-stroke:0 transparent;">:</span>58</div>
</div>
</body>
</html>
